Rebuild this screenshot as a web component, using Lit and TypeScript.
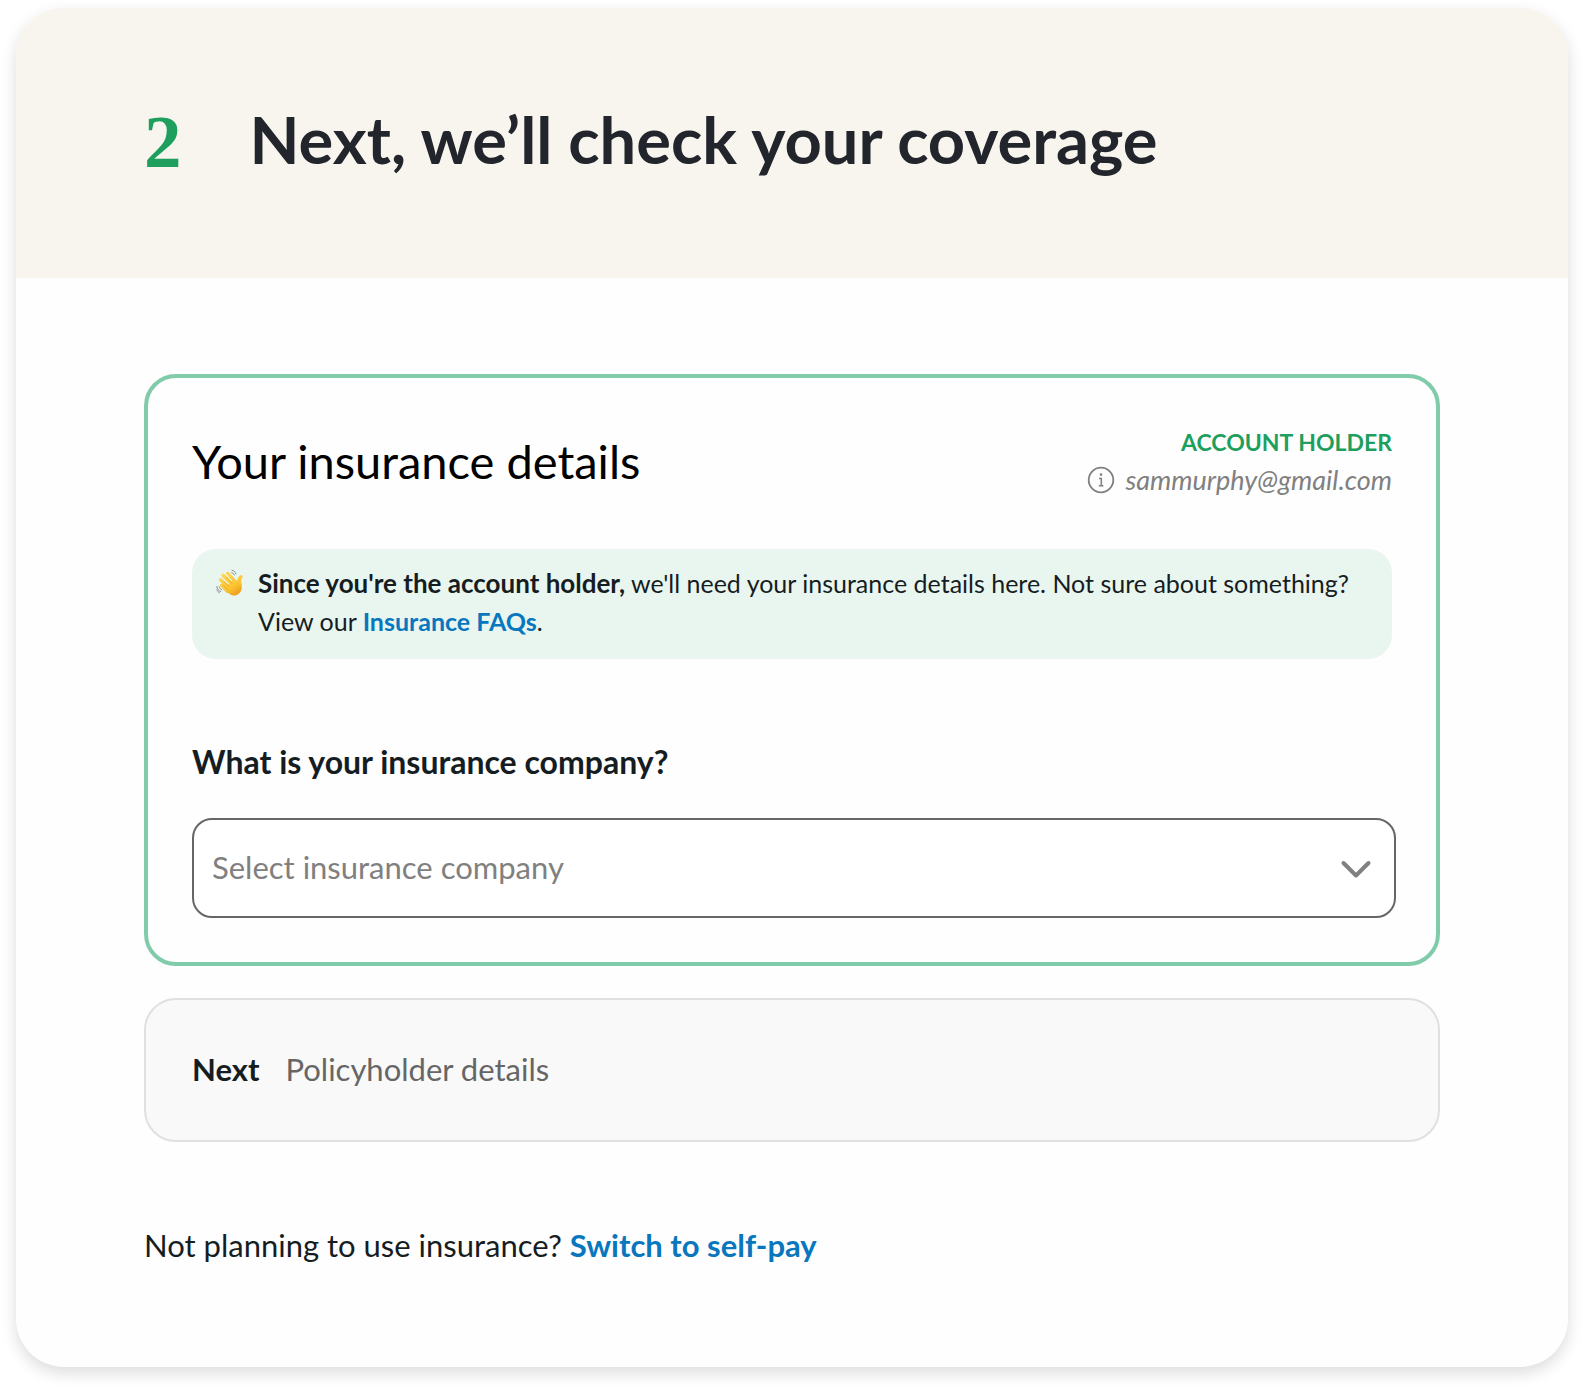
import { LitElement, html, css } from "lit";
import { customElement, state } from "lit/decorators.js";

const COMPANIES = ["Aetna", "Blue Cross Blue Shield", "Cigna", "UnitedHealthcare"];

@customElement("app-root")
export class AppRoot extends LitElement {
  @state() private company = "";

  static styles = css`
    :host {
      display: block;
      padding: 8px 16px 24px;
      background: #fff;
      color: #161d22;
      font-family: Lato, "Open Sans", sans-serif;
      font-size: 31px;
      line-height: 48px;
    }
    * { box-sizing: border-box; }
    h1, h2, p { margin: 0; }
    a { color: #0877be; font-weight: 700; text-decoration: none; }
    .card {
      border-radius: 48px;
      overflow: hidden;
      background: #fefefe;
      box-shadow: 0 6px 16px rgba(0, 0, 0, 0.14);
    }
    .header {
      display: flex;
      align-items: flex-start;
      gap: 68px;
      padding: 90px 128px 92px;
      background: #f8f5ee;
    }
    .step {
      color: #1f9f5e;
      font-family: "Liberation Serif", serif;
      font-weight: 700;
      font-size: 75px;
      line-height: 88px;
    }
    h1 { color: #22252b; font-size: 65px; line-height: 82px; font-weight: 700; }
    .body { padding: 96px 128px; }
    .panel {
      padding: 45px 44px 44px;
      border: 4px solid #80cbaa;
      border-radius: 32px;
    }
    .top { display: flex; justify-content: space-between; align-items: center; }
    h2 { color: #000; font-size: 47px; line-height: 56px; font-weight: 400; }
    .account { font-size: 27px; line-height: 38px; text-align: right; }
    .role { color: #1f9f5e; font-size: 23px; font-weight: 700; }
    .email {
      display: flex;
      align-items: center;
      justify-content: flex-end;
      gap: 10px;
      color: #808080;
      font-style: italic;
    }
    .info { width: 28px; height: 28px; }
    .notice {
      display: flex;
      gap: 14px;
      margin-top: 50px;
      padding: 15px 24px 19px;
      border-radius: 24px;
      background: #e9f6f0;
      font-size: 25px;
      line-height: 38px;
    }
    .notice strong { font-size: 26px; }
    .wave { flex: none; width: 28px; height: 28px; margin-top: 5px; }
    .label { display: block; margin: 79px 0 32px; font-size: 32px; font-weight: 700; }
    .field { display: grid; align-items: center; margin: 0 -4px 0 0; }
    select, .chevron { grid-area: 1 / 1; }
    select {
      appearance: none;
      width: 100%;
      height: 100px;
      padding: 0 80px 2px 18px;
      border: 2px solid #666;
      border-radius: 20px;
      background: #fff;
      color: #808080;
      font: inherit;
    }
    select.chosen { color: #161d22; }
    .chevron {
      justify-self: end;
      width: 32px;
      height: 20px;
      margin: 2px 24px 0 0;
      pointer-events: none;
    }
    .next {
      display: flex;
      gap: 26px;
      margin-top: 32px;
      padding: 45px 46px 47px;
      border: 2px solid #e0e0e0;
      border-radius: 32px;
      background: #f9f9f9;
      color: #666;
    }
    .next strong { color: #161d22; }
    .switch { margin-top: 79px; padding-bottom: 2px; }
  `;

  private onPick(e: Event) {
    this.company = (e.target as HTMLSelectElement).value;
  }

  private infoIcon() {
    return html`<svg class="info" viewBox="0 0 28 28" fill="none" stroke="#808080" aria-hidden="true">
      <circle cx="14" cy="14" r="12.3" stroke-width="1.8" />
      <path d="M12 12.5h2.3v7M11.8 19.7h4.6" stroke-width="1.6" />
      <circle cx="14" cy="8.6" r="1.3" fill="#808080" stroke="none" />
    </svg>`;
  }

  private waveIcon() {
    return html`<svg class="wave" viewBox="0 0 28 28" fill="none" stroke-linecap="round" role="img" aria-label="Waving hand">
      <defs>
        <linearGradient id="skin" x1="6" y1="3" x2="20" y2="27" gradientUnits="userSpaceOnUse">
          <stop stop-color="#ffd95c" />
          <stop offset="0.65" stop-color="#fcc431" />
          <stop offset="1" stop-color="#e99a1c" />
        </linearGradient>
      </defs>
      <g stroke="url(#skin)" stroke-width="3.4">
        <path d="M5.6 16.2l6 6M4.6 10.8l9 8.6M7 6.2l9.4 9.6M11.6 4.2l8.4 9.6" />
        <path d="M23.2 13.5c-.4-2 .2-4.500 1.700-5.700" />
      </g>
      <path fill="url(#skin)" d="M8 19L18.600 10.600c1 1.200 2.200 1.400 3.200.6l3.400-.8c-.3 3 1 6 .5 9.300-.5 3.700-4 6.800-7.700 6.800-2.800 0-5-1.800-6.600-3.800z" />
      <path d="M8 12.600l5.200 5M10.400 8.400l5.400 5.700M7.500 16.600l4 3.900" stroke="#e39a20" stroke-width=".7" />
      <path d="M16 1.200c2.100.4 3.400 1.800 3.900 3.700M15.800 3.600c1.300.3 2.100 1.200 2.400 2.400M.8 17.600c.3 2.200 1.700 4.200 3.800 5M.9 20.800c.4 1.300 1.300 2.300 2.500 2.900M3.200 17.800c.4 1.400 1.300 2.400 2.500 3" stroke="#858b8c" stroke-width="1" />
    </svg>`;
  }

  render() {
    return html`<main class="card">
      <header class="header">
        <span class="step">2</span>
        <h1>Next, we’ll check your coverage</h1>
      </header>
      <div class="body">
        <section class="panel">
          <div class="top">
            <h2>Your insurance details</h2>
            <div class="account">
              <div class="role">ACCOUNT HOLDER</div>
              <div class="email">${this.infoIcon()}<span>sammurphy@gmail.com</span></div>
            </div>
          </div>
          <div class="notice">
            ${this.waveIcon()}
            <p>
              <strong>Since you're the account holder,</strong> we'll need your insurance details here. Not sure about
              something? View our <a href="#faqs">Insurance FAQs</a>.
            </p>
          </div>
          <label class="label" for="company">What is your insurance company?</label>
          <div class="field">
            <select id="company" class=${this.company ? "chosen" : ""} @change=${this.onPick}>
              <option value="" selected>Select insurance company</option>
              ${COMPANIES.map((c) => html`<option value=${c}>${c}</option>`)}
            </select>
            <svg class="chevron" viewBox="0 0 32 20" fill="none" aria-hidden="true">
              <path d="M3.500 4L16 16.500 28.500 4" stroke="#808080" stroke-width="4" stroke-linecap="round" stroke-linejoin="round" />
            </svg>
          </div>
        </section>
        <section class="next"><strong>Next</strong><span>Policyholder details</span></section>
        <p class="switch">Not planning to use insurance? <a href="#self-pay">Switch to self-pay</a></p>
      </div>
    </main>`;
  }
}
